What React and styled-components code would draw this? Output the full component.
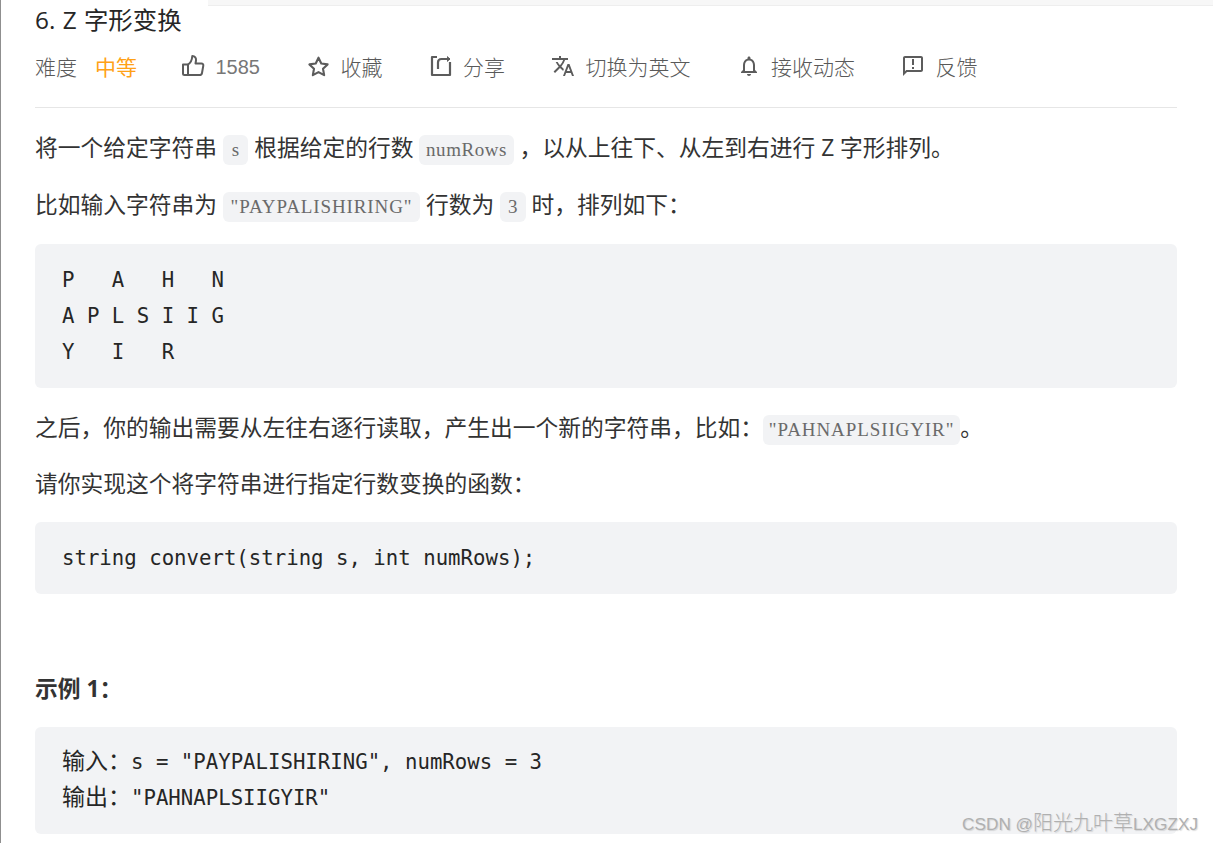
import React from 'react';
import styled, { createGlobalStyle } from 'styled-components';
import { MdTranslate, MdOutlineNotifications, MdOutlineAnnouncement } from 'react-icons/md';

const GlobalStyle = createGlobalStyle`
    html, body {
        margin: 0;
        padding: 0;
        background: #fff;
    }
    body {
        font-family: "Open Sans", "Noto Sans CJK SC", sans-serif;
        color: #333;
    }
`;

const Page = styled.div`
    position: relative;
    width: 1213px;
    height: 843px;
    overflow: hidden;
    box-sizing: border-box;
    border-left: 1px solid #8f8f8f;
    padding: 0 36px 0 34px;
`;

const TopStrip = styled.div`
    position: absolute;
    top: 0;
    left: 207px;
    right: 0;
    height: 5px;
    background: #f7f7f7;
    border-bottom: 1px solid #eeeeee;
`;

const Title = styled.h1`
    margin: 0;
    height: 37px;
    font-size: 24.4px;
    line-height: 39px;
    font-weight: 400;
    word-spacing: 1px;
    color: #262626;
`;

const Meta = styled.div`
    display: flex;
    align-items: center;
    height: 58px;
    padding-bottom: 12px;
    border-bottom: 1px solid #e6e6e6;
    font-size: 21px;
    font-weight: 300;
    color: #595959;
`;

const Label = styled.span`
    margin-right: 18px;
`;

const Level = styled.span`
    color: #ffa116;
    font-weight: 400;
    margin-right: 44px;
`;

const Action = styled.span`
    display: flex;
    align-items: center;
    gap: 10.5px;
    margin-right: 46px;
`;

const IconBox = styled.span`
    display: flex;
    align-items: center;
    justify-content: center;
    width: 24px;
    height: 24px;
    color: #5c5c5c;
`;

const Count = styled.span`
    font-family: "Liberation Sans", sans-serif;
    font-size: 20px;
    padding-top: 3px;
    color: #777;
`;

const Text = styled.p`
    margin: ${(p) => p.$top}px 0 0;
    font-size: 22.75px;
    line-height: 36px;
    height: 36px;
    font-weight: 400;
    color: #333;
    white-space: nowrap;
`;

// inline code is a fixed cell width in the picture, so the box is sized from the character count
const Code = styled.code`
    display: inline-block;
    box-sizing: border-box;
    width: ${(p) => p.$chars * 11.45 + 14}px;
    text-align: center;
    font-family: "Liberation Serif", serif;
    font-size: 19px;
    letter-spacing: ${(p) => p.$track || 0.55}px;
    line-height: 30px;
    height: 30px;
    border-radius: 6px;
    background: #f2f3f5;
    color: #6a6a6a;
`;

const Block = styled.pre`
    margin: ${(p) => p.$top}px 0 0;
    padding: ${(p) => p.$padTop || 17.5}px 27px 18px;
    border-radius: 6px;
    background: #f2f3f5;
    font-family: "DejaVu Sans Mono", "Noto Sans CJK SC", monospace;
    font-size: 20.7px;
    line-height: 36px;
    color: #262626;
`;

const Cjk = styled.span`
    font-family: "Noto Sans CJK SC", sans-serif;
    font-size: 23px;
    line-height: 1;
`;

const Heading = styled.p`
    margin: 77px 0 0;
    font-size: 22.75px;
    line-height: 36px;
    font-weight: 700;
    color: #333;
`;

const Watermark = styled.div`
    position: absolute;
    right: 15px;
    bottom: 6px;
    font-family: "Liberation Sans", sans-serif;
    font-size: 17.2px;
    line-height: 26px;
    color: #b0b0b0;
    text-shadow: 1px 1px 1px rgba(120, 120, 120, 0.25);
`;

const WatermarkCjk = styled.span`
    font-family: "Noto Sans CJK SC", sans-serif;
    font-size: 20px;
    font-weight: 300;
`;

function ThumbIcon() {
    return (
        <svg width="24" height="24" viewBox="0 0 24 24" fill="none" stroke="currentColor" strokeWidth="2" strokeLinejoin="round">
            <path d="M2 10.5h5V21H3.5A1.5 1.5 0 0 1 2 19.5z" />
            <path d="M7 10.5c2.5-1.5 4-4.500 4.300-8.500 2.700 0 4 2 3.700 4.500l-.5 3h6c1.200 0 2 1 1.800 2.200l-1.300 7.300c-.2 1.200-1 2-2.300 2H7" />
        </svg>
    );
}

function StarIcon() {
    return (
        <svg width="23" height="23" viewBox="0 0 24 24" fill="none" stroke="currentColor" strokeWidth="2.200" strokeLinejoin="round">
            <path d="M12 2.800l2.900 6.100 6.600.9-4.800 4.600 1.200 6.600L12 17.800 6.100 21l1.200-6.600-4.800-4.600 6.600-.9z" />
        </svg>
    );
}

function ShareIcon() {
    return (
        <svg width="24" height="24" viewBox="0 0 24 24" fill="none" stroke="currentColor" strokeWidth="2.200" strokeLinejoin="round">
            <path d="M8 3H3v18h18V8" />
            <path d="M9 15V8.500C9 6 10.500 5 12.500 5H21" />
            <path d="M18 2.500 21 5l-3 2.500" fill="currentColor" strokeWidth="1" />
        </svg>
    );
}

function App() {
    return (
        <>
            <GlobalStyle />
            <Page>
                <TopStrip />
                <Title>6. Z 字形变换</Title>
                <Meta>
                    <Label>难度</Label>
                    <Level>中等</Level>
                    <Action>
                        <IconBox><ThumbIcon /></IconBox>
                        <Count>1585</Count>
                    </Action>
                    <Action>
                        <IconBox><StarIcon /></IconBox>
                        收藏
                    </Action>
                    <Action>
                        <IconBox><ShareIcon /></IconBox>
                        分享
                    </Action>
                    <Action>
                        <IconBox><MdTranslate size={26} /></IconBox>
                        切换为英文
                    </Action>
                    <Action>
                        <IconBox><MdOutlineNotifications size={26} /></IconBox>
                        接收动态
                    </Action>
                    <Action>
                        <IconBox><MdOutlineAnnouncement size={26} /></IconBox>
                        反馈
                    </Action>
                </Meta>
                <Text $top={22}>将一个给定字符串 <Code $chars={1}>s</Code> 根据给定的行数 <Code $chars={7}>numRows</Code> ，以从上往下、从左到右进行 Z 字形排列。</Text>
                <Text $top={21}>比如输入字符串为 <Code $chars={16} $track={0.9}>"PAYPALISHIRING"</Code> 行数为 <Code $chars={1}>3</Code> 时，排列如下：</Text>
                <Block $top={21}>{'P   A   H   N\nA P L S I I G\nY   I   R'}</Block>
                <Text $top={22.5}>之后，你的输出需要从左往右逐行读取，产生出一个新的字符串，比如：<Code $chars={16} $track={0.9}>"PAHNAPLSIIGYIR"</Code>。</Text>
                <Text $top={20}>请你实现这个将字符串进行指定行数变换的函数：</Text>
                <Block $top={20}>{'string convert(string s, int numRows);'}</Block>
                <Heading>示例 1：</Heading>
                <Block $top={20.5} $padTop={17}>
                    <Cjk>输入：</Cjk>{'s = "PAYPALISHIRING", numRows = 3\n'}
                    <Cjk>输出：</Cjk>{'"PAHNAPLSIIGYIR"'}
                </Block>
                <Watermark>CSDN @<WatermarkCjk>阳光九叶草</WatermarkCjk>LXGZXJ</Watermark>
            </Page>
        </>
    );
}

export default App;
